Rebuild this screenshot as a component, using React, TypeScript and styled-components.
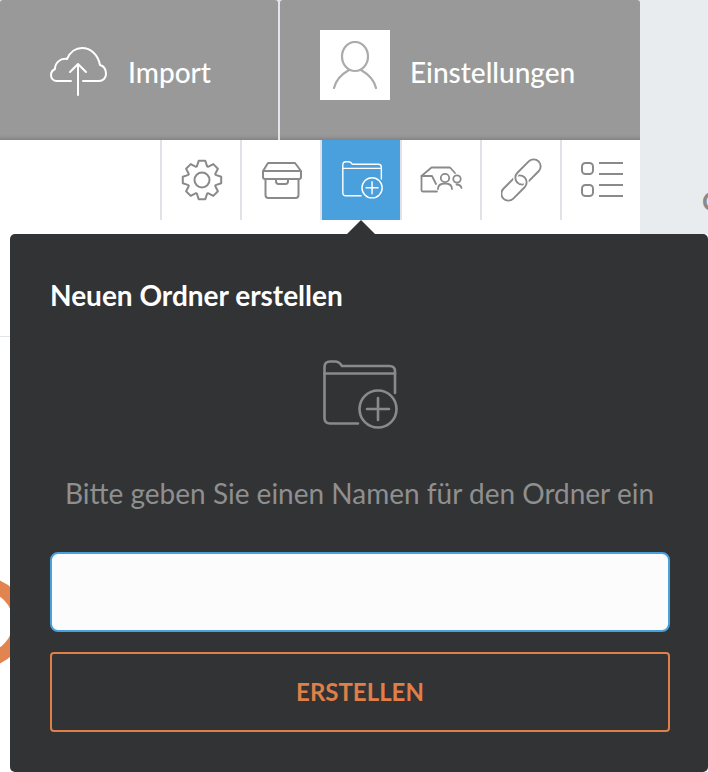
import styled, { createGlobalStyle } from 'styled-components';

const GlobalStyle = createGlobalStyle`
  html, body {
    margin: 0;
    padding: 0;
    background: #fff;
  }
  * {
    box-sizing: border-box;
  }
`;

const Page = styled.div`
  position: relative;
  width: 708px;
  height: 772px;
  overflow: hidden;
  background: #fff;
  font-family: Lato, 'Open Sans', sans-serif;
`;

const Top = styled.div`
  display: flex;
  height: 234px;
  background: #e9ecef;
`;

const Main = styled.div`
  width: 640px;
  background: #fff;
`;

const Tabs = styled.div`
  display: flex;
  gap: 2px;
  height: 140px;
  background: #e2e6ea;
`;

const Tab = styled.div<{ $width: number; $pad: number }>`
  display: flex;
  align-items: center;
  width: ${p => p.$width}px;
  padding: 3px 0 0 ${p => p.$pad}px;
  background: #999;
  box-shadow: inset 0 -5px 4px -4px rgba(0, 0, 0, 0.22);
  border-radius: 3px 3px 0 0;
  color: #fff;
  font-size: 28px;
  font-weight: 500;
`;

const Avatar = styled.div`
  display: flex;
  align-items: center;
  justify-content: center;
  align-self: flex-start;
  width: 70px;
  height: 70px;
  margin: 27px 20px 0 0;
  background: #fff;
`;

const Nav = styled.div`
  display: flex;
  justify-content: flex-end;
  height: 80px;
`;

const NavItem = styled.div<{ $active?: boolean }>`
  display: flex;
  align-items: center;
  justify-content: center;
  width: 80px;
  height: 80px;
  padding-left: 2px;
  border-left: 2px solid #dfe3e8;
  background: ${p => (p.$active ? '#4a9fdd' : '#fff')};
`;

const Panel = styled.div`
  position: relative;
  height: 538px;
  margin-left: 10px;
  padding: 43px 40px 0;
  background: #323335;
  border-radius: 5px;
  &::before {
    content: '';
    position: absolute;
    top: -14px;
    left: 337px;
    border-left: 14px solid transparent;
    border-right: 14px solid transparent;
    border-bottom: 14px solid #323335;
  }
`;

const Title = styled.h2`
  margin: 0;
  color: #fff;
  font-size: 28px;
  line-height: 36px;
  font-weight: 700;
`;

const Illustration = styled.div`
  display: flex;
  justify-content: center;
  margin-top: 47px;
  height: 69px;
  padding-left: 2px;
`;

const Hint = styled.p`
  margin: 46px 0 0;
  padding-left: 1px;
  color: #8f8f8f;
  font-size: 28px;
  line-height: 36px;
  white-space: nowrap;
  text-align: center;
`;

const NameInput = styled.input`
  display: block;
  width: 620px;
  height: 80px;
  margin-top: 41px;
  border: 2px solid #4a9fdd;
  border-radius: 8px;
  background: #fcfcfc;
  outline: none;
`;

const Submit = styled.button`
  display: block;
  width: 620px;
  height: 80px;
  margin-top: 20px;
  padding: 0 0 2px;
  border: 2px solid #e07f47;
  border-radius: 4px;
  background: transparent;
  color: #e07f47;
  font-family: inherit;
  font-size: 24px;
  font-weight: 700;
`;

const Divider = styled.div`
  position: absolute;
  top: 336px;
  left: 0;
  width: 10px;
  height: 1px;
  background: #e2e6ea;
`;

const Ring = styled.div`
  position: absolute;
  top: 577px;
  left: -63px;
  width: 90px;
  height: 90px;
  border: 14px solid #e2844f;
  border-radius: 50%;
`;

const EdgeLetter = styled.span`
  position: absolute;
  top: 185px;
  left: 702px;
  color: #8a8a8a;
  font-size: 26px;
  font-weight: 700;
`;

const CloudIcon = () => (
  <svg width="58" height="50" viewBox="0 0 58 50" fill="none" stroke="#fff" strokeWidth="2" strokeLinecap="round" strokeLinejoin="round" style={{ marginRight: 20 }}>
    <path d="M21 34H7C3 34 1 31 1 28C1 25 3 23 5 22C5 16 10 11 17 12C20 5 26 1 32 1C41 1 48 8 50 18C54 19 56 23 56 27C56 31 53 34 49 34H33" />
    <path d="M28 48V18M20 25L28 17L36 25" />
  </svg>
);

const UserIcon = () => (
  <svg width="44" height="48" viewBox="0 0 44 48" fill="none" stroke="#ababab" strokeWidth="2.200" strokeLinecap="round">
    <ellipse cx="22" cy="15.500" rx="13" ry="14.500" />
    <path d="M1 47C3 38 9 33 16 29M43 47C41 38 35 33 28 29" />
  </svg>
);

// 8 tooth gear outline, centre 21/21
const gearPath = () => {
  const pts: string[] = [];
  for (let i = 0; i < 8; i++) {
    const a = (i * Math.PI) / 4 - Math.PI / 2;
    const corners: [number, number][] = [
      [-0.36, 14.5],
      [-0.17, 19.5],
      [0.17, 19.5],
      [0.36, 14.5],
    ];
    corners.forEach(([da, r]) => {
      pts.push(`${(21 + r * Math.cos(a + da)).toFixed(1)} ${(21 + r * Math.sin(a + da)).toFixed(1)}`);
    });
  }
  return `M${pts.join('L')}Z`;
};

const GearIcon = () => (
  <svg width="42" height="42" viewBox="0 0 42 42" fill="none" stroke="#8a8a8a" strokeWidth="2" strokeLinejoin="round">
    <path d={gearPath()} />
    <circle cx="21" cy="21" r="7.500" />
  </svg>
);

const BoxIcon = () => (
  <svg width="40" height="37" viewBox="0 0 40 37" fill="none" stroke="#8a8a8a" strokeWidth="2" strokeLinejoin="round">
    <path d="M6 1H33L39 9V15C39 16 38 17 37 17H3C2 17 1 16 1 15V9Z" />
    <path d="M1 9H39" />
    <path d="M3.500 17V33C3.500 35 4.500 36 6.500 36H33.500C35.500 36 36.500 35 36.500 33V17" />
    <path d="M14 17V19C14 21 15 22 16.500 22H23.500C25 22 26 21 26 19V17" />
  </svg>
);

const FolderPlusIcon = ({ color, width }: { color: string; width: number }) => (
  <svg width={width} height={(width * 69) / 75} viewBox="0 0 75 69" fill="none" stroke={color} strokeWidth="2.600" strokeLinecap="round">
    <path d="M35 63.500H7C3.500 63.500 1.500 61.500 1.500 58V7C1.500 3.500 3.500 1.500 7 1.500H12C15.500 1.500 17.500 3.500 19 6H66.500C70 6 72 8 72 11.500V33" />
    <path d="M1.500 13.500H72" />
    <circle cx="55" cy="49" r="18.500" />
    <path d="M55 38V60M44 49H66" />
  </svg>
);

const SharedBoxIcon = () => (
  <svg width="44" height="28" viewBox="0 0 44 28" fill="none" stroke="#8a8a8a" strokeWidth="1.800" strokeLinecap="round" strokeLinejoin="round">
    <path d="M17 25.500H3C2 25.500 1.500 25 1.500 24V10L11.500 1.500H30L35 7" />
    <path d="M1.500 10H12L16 18" />
    <circle cx="25" cy="12" r="4.200" />
    <path d="M18 23C18 19 21 17.500 25 17.500C29 17.500 32 19 32 23" />
    <circle cx="37" cy="13" r="3.700" />
    <path d="M36.500 18.500C39 18.500 41 20 41.500 22" />
  </svg>
);

// chain links: the upper link is redrawn over one crossing so they interlock
const LinkIcon = () => {
  const upper = { x: -15, y: -7, width: 30, height: 14, rx: 7, transform: 'translate(27 14) rotate(-45)' };
  const lower = { x: -15, y: -7, width: 30, height: 14, rx: 7, transform: 'translate(13 30) rotate(-45)' };
  return (
    <svg width="42" height="44" viewBox="0 0 42 44" fill="none" stroke="#8a8a8a" strokeWidth="1.900">
      <defs>
        <clipPath id="link-half">
          <polygon points="0,0 44,0 0,44" />
        </clipPath>
      </defs>
      <rect {...upper} />
      <rect {...lower} stroke="#fff" strokeWidth="4.500" />
      <rect {...lower} />
      <g clipPath="url(#link-half)">
        <rect {...upper} stroke="#fff" strokeWidth="4.500" />
        <rect {...upper} />
      </g>
    </svg>
  );
};

const ListIcon = () => (
  <svg width="42" height="36" viewBox="0 0 42 36" fill="none" stroke="#8a8a8a" strokeWidth="2">
    <rect x="1" y="1" width="11" height="11" rx="3.500" />
    <rect x="1" y="23" width="11" height="11" rx="3.500" />
    <path d="M18 1H42M18 12H42M18 23H42M18 34H42" />
  </svg>
);

export default function App() {
  return (
    <Page>
      <GlobalStyle />
      <Top>
        <Main>
          <Tabs>
            <Tab $width={278} $pad={50}>
              <CloudIcon />
              Import
            </Tab>
            <Tab $width={360} $pad={40}>
              <Avatar>
                <UserIcon />
              </Avatar>
              Einstellungen
            </Tab>
          </Tabs>
          <Nav>
            <NavItem>
              <GearIcon />
            </NavItem>
            <NavItem>
              <BoxIcon />
            </NavItem>
            <NavItem $active>
              <FolderPlusIcon color="#fff" width={41} />
            </NavItem>
            <NavItem>
              <SharedBoxIcon />
            </NavItem>
            <NavItem>
              <LinkIcon />
            </NavItem>
            <NavItem>
              <ListIcon />
            </NavItem>
          </Nav>
        </Main>
      </Top>
      <EdgeLetter>C</EdgeLetter>
      <Divider />
      <Ring />
      <Panel>
        <Title>Neuen Ordner erstellen</Title>
        <Illustration>
          <FolderPlusIcon color="#8a8a8a" width={75} />
        </Illustration>
        <Hint>Bitte geben Sie einen Namen für den Ordner ein</Hint>
        <NameInput />
        <Submit>ERSTELLEN</Submit>
      </Panel>
    </Page>
  );
}
